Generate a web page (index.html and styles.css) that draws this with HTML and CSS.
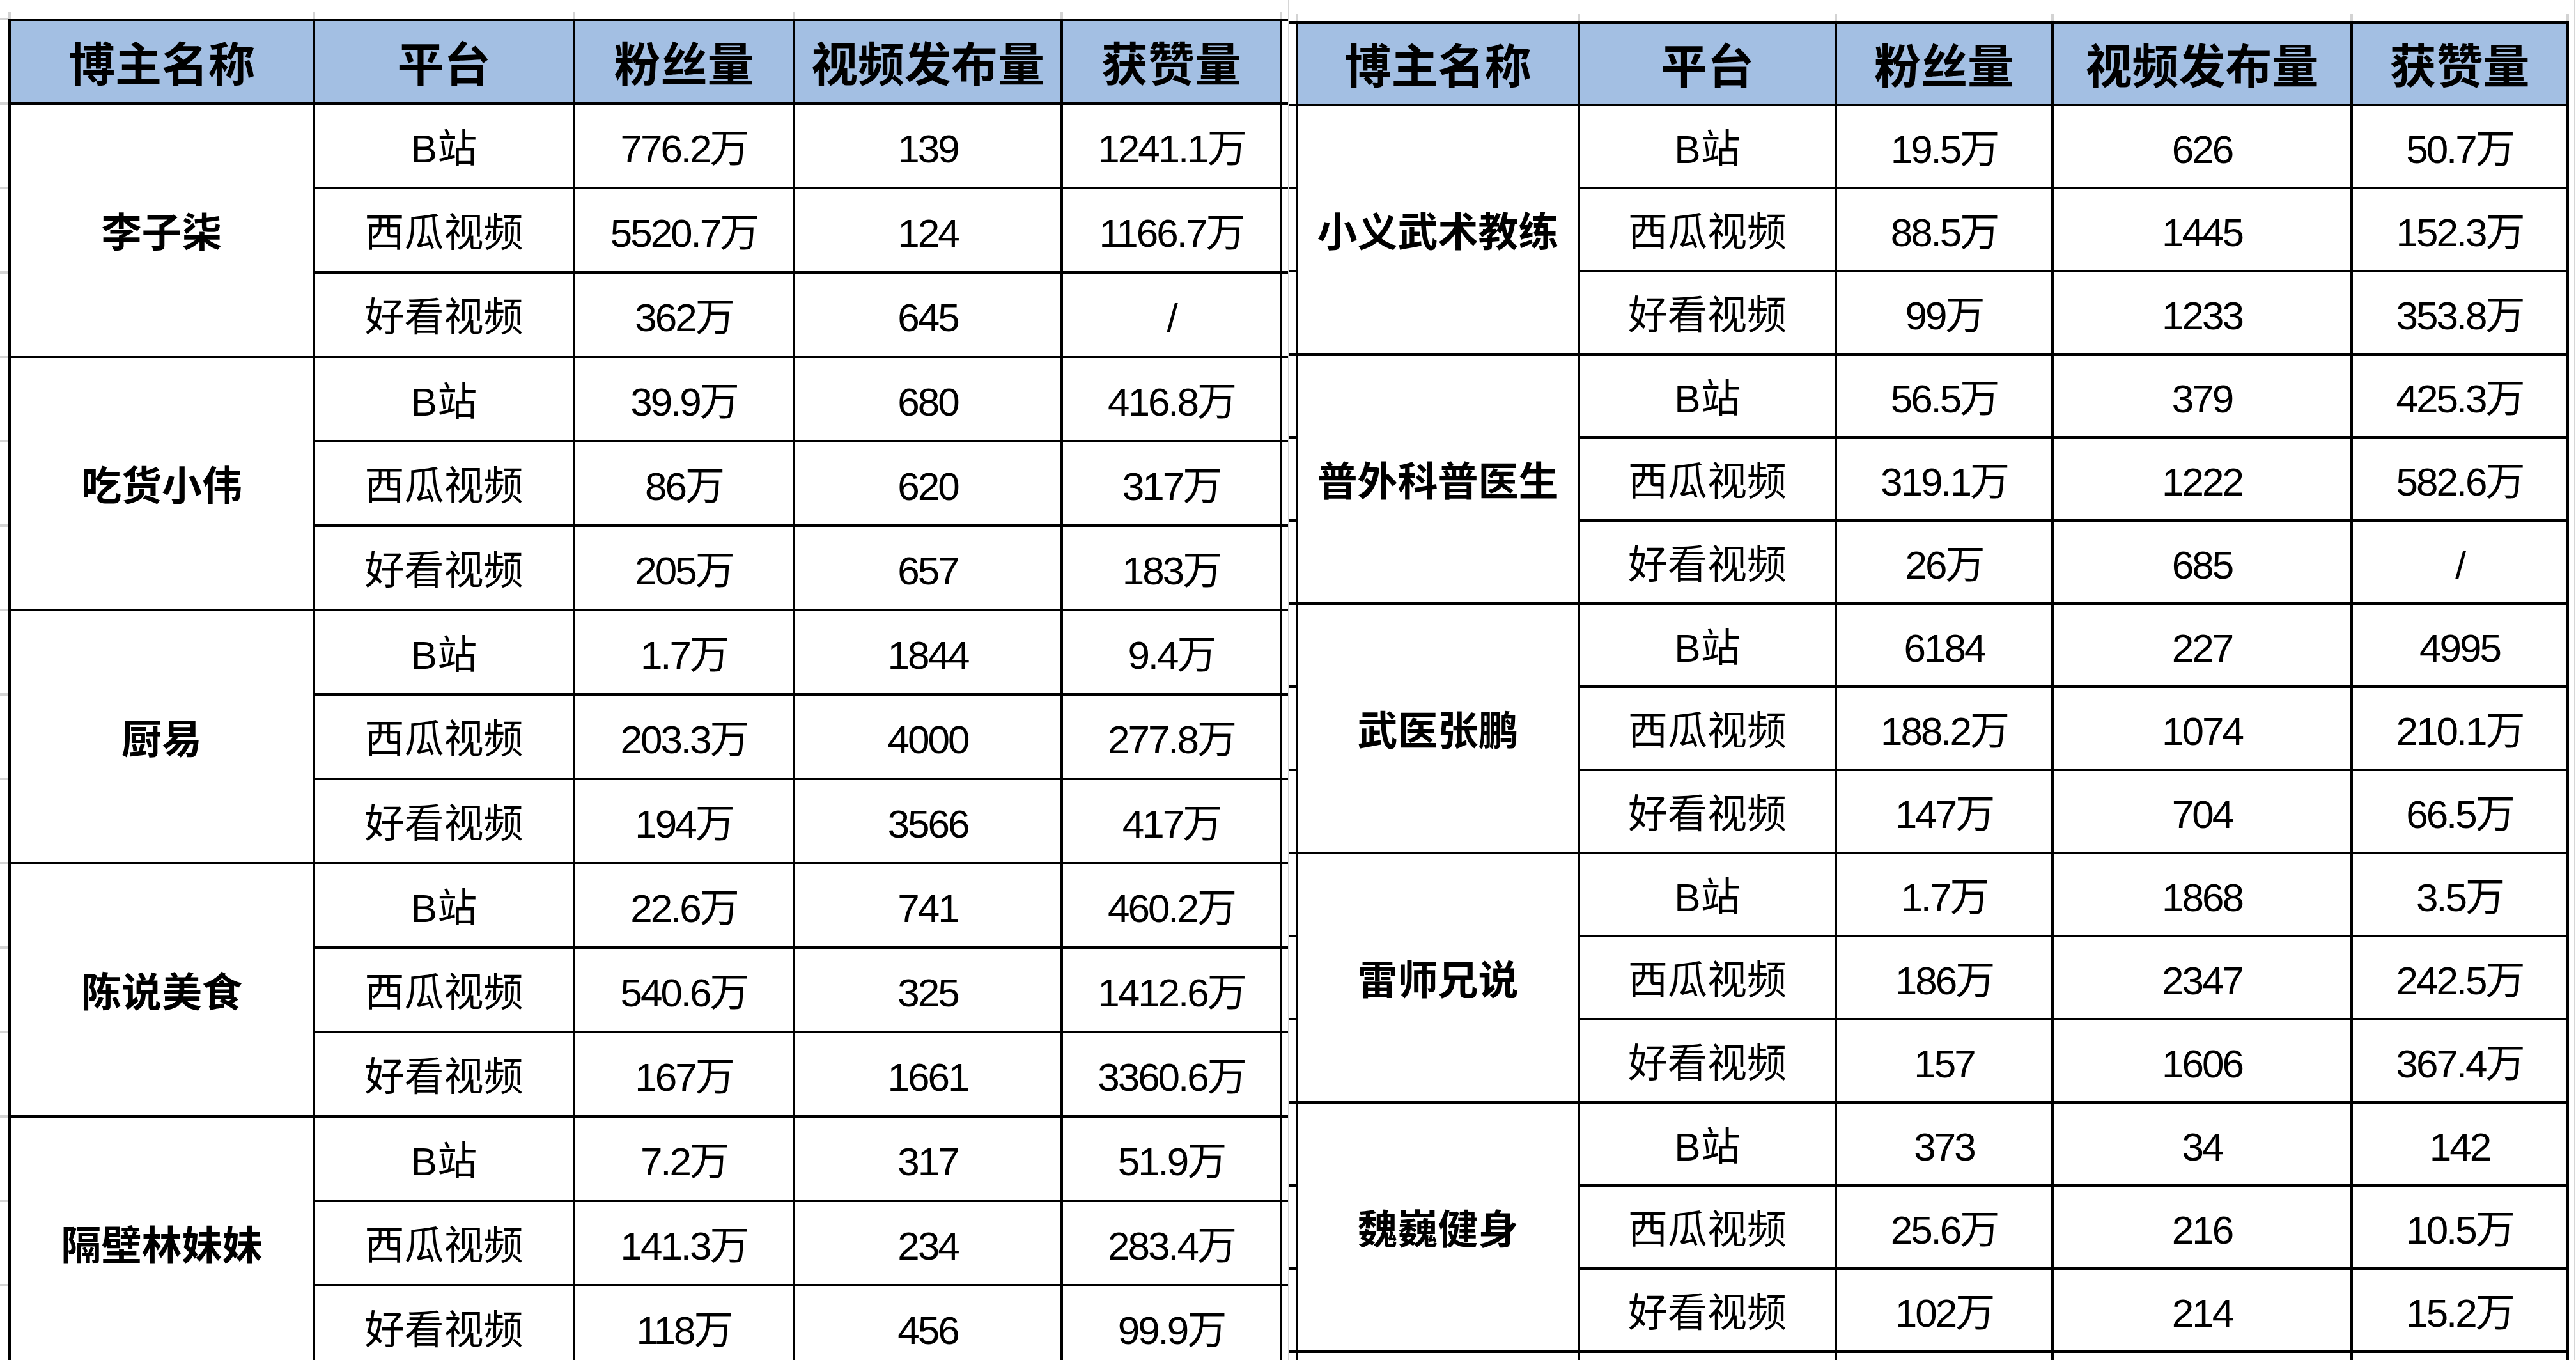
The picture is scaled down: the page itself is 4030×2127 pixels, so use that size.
FILE: index.html
```html
<!DOCTYPE html>
<html lang="zh-CN">
<head>
<meta charset="utf-8">
<title>博主数据</title>
<link rel="stylesheet" href="styles.css">
</head>
<body>
<div class="page">
  <section class="panel panel-left">
    <div class="ruler ruler-left"><span></span><span></span><span></span><span></span><span></span><span></span></div>
    <div class="sheet sheet-left">
      <div class="cell head">博主名称</div><div class="cell head">平台</div><div class="cell head">粉丝量</div><div class="cell head">视频发布量</div><div class="cell head">获赞量</div><div class="stub"></div>

      <div class="cell name">李子柒</div><div class="cell">B站</div><div class="cell num">776.2万</div><div class="cell num">139</div><div class="cell num">1241.1万</div><div class="stub"></div>
      <div class="cell">西瓜视频</div><div class="cell num">5520.7万</div><div class="cell num">124</div><div class="cell num">1166.7万</div><div class="stub"></div>
      <div class="cell">好看视频</div><div class="cell num">362万</div><div class="cell num">645</div><div class="cell num">/</div><div class="stub"></div>

      <div class="cell name">吃货小伟</div><div class="cell">B站</div><div class="cell num">39.9万</div><div class="cell num">680</div><div class="cell num">416.8万</div><div class="stub"></div>
      <div class="cell">西瓜视频</div><div class="cell num">86万</div><div class="cell num">620</div><div class="cell num">317万</div><div class="stub"></div>
      <div class="cell">好看视频</div><div class="cell num">205万</div><div class="cell num">657</div><div class="cell num">183万</div><div class="stub"></div>

      <div class="cell name">厨易</div><div class="cell">B站</div><div class="cell num">1.7万</div><div class="cell num">1844</div><div class="cell num">9.4万</div><div class="stub"></div>
      <div class="cell">西瓜视频</div><div class="cell num">203.3万</div><div class="cell num">4000</div><div class="cell num">277.8万</div><div class="stub"></div>
      <div class="cell">好看视频</div><div class="cell num">194万</div><div class="cell num">3566</div><div class="cell num">417万</div><div class="stub"></div>

      <div class="cell name">陈说美食</div><div class="cell">B站</div><div class="cell num">22.6万</div><div class="cell num">741</div><div class="cell num">460.2万</div><div class="stub"></div>
      <div class="cell">西瓜视频</div><div class="cell num">540.6万</div><div class="cell num">325</div><div class="cell num">1412.6万</div><div class="stub"></div>
      <div class="cell">好看视频</div><div class="cell num">167万</div><div class="cell num">1661</div><div class="cell num">3360.6万</div><div class="stub"></div>

      <div class="cell name">隔壁林妹妹</div><div class="cell">B站</div><div class="cell num">7.2万</div><div class="cell num">317</div><div class="cell num">51.9万</div><div class="stub"></div>
      <div class="cell">西瓜视频</div><div class="cell num">141.3万</div><div class="cell num">234</div><div class="cell num">283.4万</div><div class="stub"></div>
      <div class="cell">好看视频</div><div class="cell num">118万</div><div class="cell num">456</div><div class="cell num">99.9万</div><div class="stub"></div>
    </div>
  </section>

  <section class="panel panel-right">
    <div class="ruler ruler-right"><span></span><span></span><span></span><span></span><span></span><span></span></div>
    <div class="sheet sheet-right">
      <div class="stub"></div><div class="cell head">博主名称</div><div class="cell head">平台</div><div class="cell head">粉丝量</div><div class="cell head">视频发布量</div><div class="cell head">获赞量</div>

      <div class="stub"></div><div class="cell name">小义武术教练</div><div class="cell">B站</div><div class="cell num">19.5万</div><div class="cell num">626</div><div class="cell num">50.7万</div>
      <div class="stub"></div><div class="cell">西瓜视频</div><div class="cell num">88.5万</div><div class="cell num">1445</div><div class="cell num">152.3万</div>
      <div class="stub"></div><div class="cell">好看视频</div><div class="cell num">99万</div><div class="cell num">1233</div><div class="cell num">353.8万</div>

      <div class="stub"></div><div class="cell name">普外科普医生</div><div class="cell">B站</div><div class="cell num">56.5万</div><div class="cell num">379</div><div class="cell num">425.3万</div>
      <div class="stub"></div><div class="cell">西瓜视频</div><div class="cell num">319.1万</div><div class="cell num">1222</div><div class="cell num">582.6万</div>
      <div class="stub"></div><div class="cell">好看视频</div><div class="cell num">26万</div><div class="cell num">685</div><div class="cell num">/</div>

      <div class="stub"></div><div class="cell name">武医张鹏</div><div class="cell">B站</div><div class="cell num">6184</div><div class="cell num">227</div><div class="cell num">4995</div>
      <div class="stub"></div><div class="cell">西瓜视频</div><div class="cell num">188.2万</div><div class="cell num">1074</div><div class="cell num">210.1万</div>
      <div class="stub"></div><div class="cell">好看视频</div><div class="cell num">147万</div><div class="cell num">704</div><div class="cell num">66.5万</div>

      <div class="stub"></div><div class="cell name">雷师兄说</div><div class="cell">B站</div><div class="cell num">1.7万</div><div class="cell num">1868</div><div class="cell num">3.5万</div>
      <div class="stub"></div><div class="cell">西瓜视频</div><div class="cell num">186万</div><div class="cell num">2347</div><div class="cell num">242.5万</div>
      <div class="stub"></div><div class="cell">好看视频</div><div class="cell num">157</div><div class="cell num">1606</div><div class="cell num">367.4万</div>

      <div class="stub"></div><div class="cell name">魏巍健身</div><div class="cell">B站</div><div class="cell num">373</div><div class="cell num">34</div><div class="cell num">142</div>
      <div class="stub"></div><div class="cell">西瓜视频</div><div class="cell num">25.6万</div><div class="cell num">216</div><div class="cell num">10.5万</div>
      <div class="stub"></div><div class="cell">好看视频</div><div class="cell num">102万</div><div class="cell num">214</div><div class="cell num">15.2万</div>

      <div class="stub"></div><div class="cell"></div><div class="cell"></div><div class="cell"></div><div class="cell"></div><div class="cell"></div>
    </div>
  </section>
</div>
</body>
</html>
```

FILE: styles.css
```css
html, body {
  margin: 0;
  padding: 0;
  background: #ffffff;
  overflow: hidden;
}

.page {
  display: flex;
  width: 4030px;
  height: 2127px;
  overflow: hidden;
  background: #ffffff;
  font-family: "Liberation Sans", "Noto Sans CJK SC", sans-serif;
  color: #000000;
}

.panel {
  box-sizing: border-box;
  display: flex;
  flex-direction: column;
  align-items: flex-start;
  border-right: 1px solid #d6d6d6;
}

.panel-left {
  flex: 0 0 2016px;
  padding: 18px 0 0 13px;
  background-image: linear-gradient(#d3d3d3 0 4px, transparent 4px);
  background-size: 13px 132px;
  background-repeat: repeat-y;
  background-position: 0 160px;
}

.panel-right {
  flex: 0 0 2012px;
  padding: 22px 0 0 0;
}

.ruler {
  flex-shrink: 0;
  display: grid;
  height: 11px;
  column-gap: 4px;
  background: #d3d3d3;
}

.ruler span {
  background: #ffffff;
}

.ruler-left {
  grid-template-columns: 472px 403px 340px 415px 339px 9px;
  padding-left: 4px;
}

.ruler-right {
  grid-template-columns: 11px 437px 398px 335px 464px 334px;
  padding-right: 4px;
}

.sheet {
  flex-shrink: 0;
  display: grid;
  gap: 4px;
  background: #000000;
}

.sheet-left {
  grid-template-columns: 472px 403px 340px 415px 339px 9px;
  grid-template-rows: 127px;
  grid-auto-rows: 128px;
  padding: 4px 0 4px 4px;
}

.sheet-right {
  grid-template-columns: 11px 437px 398px 335px 464px 334px;
  grid-template-rows: 125px;
  grid-auto-rows: 126px;
  padding: 4px 4px 4px 0;
}

.cell {
  box-sizing: border-box;
  background: #ffffff;
  display: flex;
  align-items: center;
  justify-content: center;
  padding-top: 10px;
  font-size: 62px;
  line-height: 1.2;
  white-space: nowrap;
}

.head {
  background: #a3bfe3;
  font-size: 73px;
  font-weight: 700;
}

.name {
  grid-row: span 3;
  font-size: 63px;
  font-weight: 700;
}

.num {
  letter-spacing: -3px;
}

.stub {
  background: #ffffff;
}
```
